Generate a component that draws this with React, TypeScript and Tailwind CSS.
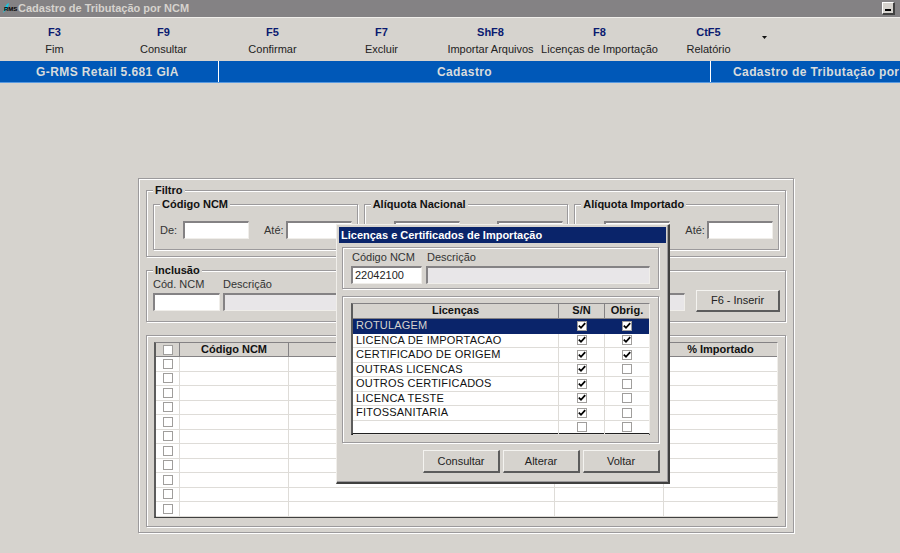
const face = "bg-[#d6d3ce]";

// etched frame used by every group box
const etched = "border border-[#9c9a9c] shadow-[inset_1px_1px_0_#fff,1px_1px_0_#fff]";
const sunken = "border border-t-2 border-l-2 border-t-[#848284] border-l-[#848284] border-r-[#f0eeea] border-b-[#f0eeea]";
const raised =
  "border border-r-2 border-b-2 border-t-[#f4f3f0] border-l-[#f4f3f0] border-r-[#5c5c5c] border-b-[#5c5c5c] bg-[#d6d3ce] text-[11px] text-[#222]";

const toolbar = [
  { key: "F3", label: "Fim" },
  { key: "F9", label: "Consultar" },
  { key: "F5", label: "Confirmar" },
  { key: "F7", label: "Excluir" },
  { key: "ShF8", label: "Importar Arquivos" },
  { key: "F8", label: "Licenças de Importação" },
  { key: "CtF5", label: "Relatório" },
];

const licencas = [
  { nome: "ROTULAGEM", sn: true, obrig: true },
  { nome: "LICENCA DE IMPORTACAO", sn: true, obrig: true },
  { nome: "CERTIFICADO DE ORIGEM", sn: true, obrig: true },
  { nome: "OUTRAS LICENCAS", sn: true, obrig: false },
  { nome: "OUTROS CERTIFICADOS", sn: true, obrig: false },
  { nome: "LICENCA TESTE", sn: true, obrig: false },
  { nome: "FITOSSANITARIA", sn: true, obrig: false },
  { nome: "", sn: false, obrig: false },
];

const Check = ({ checked = false }: { checked?: boolean }) => (
  <span className="flex h-[10px] w-[10px] items-center justify-center border border-[#a09e9c] bg-white">
    {checked && (
      <svg width="8" height="8" viewBox="0 0 8 8">
        <path d="M0.8 3.6 L3 5.8 L7.2 1.2" fill="none" stroke="#000" strokeWidth="1.8" />
      </svg>
    )}
  </span>
);

const Legend = ({ text, className }: { text: string; className: string }) => (
  <span className={`absolute bg-[#d6d3ce] px-[2px] text-[11px] leading-none font-bold text-[#111] ${className}`}>
    {text}
  </span>
);

const Input = ({ className, value }: { className: string; value?: string }) => (
  <div className={`h-[18px] bg-white ${sunken} ${className} pl-[2px] text-[11px] leading-[14px] text-[#222]`}>{value}</div>
);

const RangeGroup = ({ title, last }: { title: string; last?: boolean }) => (
  <div className={`relative flex h-[46px] flex-1 items-start pt-[16px] pl-[6px] ${etched}`}>
    <Legend text={title} className="top-[-6px] left-[6px]" />
    <span className="w-[23px] pt-[1px] text-[11px] text-[#333]">{last ? "" : "De:"}</span>
    <Input className="w-[66px]" />
    <span className={`w-[37px] pt-[1px] pl-[15px] text-[11px] text-[#333] ${last ? "ml-0" : ""}`}>Até:</span>
    <Input className="w-[66px]" />
  </div>
);

export default function App() {
  return (
    <div
      className={`relative h-[553px] w-[900px] overflow-hidden ${face}`}
      style={{ fontFamily: '"Liberation Sans", Arial, sans-serif' }}
    >
      {/* title bar */}
      <div className="flex h-[17px] items-center bg-[#848284] pr-[5px] pl-[2px]">
        <span className="relative flex h-[14px] w-[16px] shrink-0 items-center">
          <svg width="8" height="13" viewBox="0 0 8 13" className="absolute left-0 top-0">
            <path d="M1 11 L3 5 L5 2 L7 1 L6 5 L3 9 Z" fill="#18c8e0" />
          </svg>
          <span className="absolute left-[2px] top-[4px] text-[6px] leading-none font-bold text-black">RMS</span>
        </span>
        <span className="text-[11px] leading-none font-bold text-[#d6d3ce]">Cadastro de Tributação por NCM</span>
        <div className="ml-auto flex gap-0">
          <span className={`flex h-[13px] w-[13px] items-end justify-center pb-[2px] ${"border border-r-2 border-b-2 border-t-white border-l-white border-r-[#404040] border-b-[#404040] bg-[#d6d3ce]"}`}>
            <span className="h-[2px] w-[6px] bg-black" />
          </span>
        </div>
      </div>
      <div className="h-[1px] bg-[#f0eeea]" />

      {/* toolbar */}
      <div className="flex h-[43px] items-start pt-[8px]">
        {toolbar.map((t) => (
          <div key={t.label} className="flex w-[109px] flex-col items-center">
            <span className="text-[11px] leading-[13px] font-bold text-[#0a1a70]">{t.key}</span>
            <span className="mt-[4px] text-[11px] leading-[13px] whitespace-nowrap text-[#222]">{t.label}</span>
          </div>
        ))}
        <svg width="7" height="4" viewBox="0 0 7 4" className="mt-[10px] ml-[-2px] fill-[#111]">
          <path d="M1 0 H6 L3.5 3 Z" />
        </svg>
      </div>

      {/* blue module band */}
      <div className="flex h-[22px] w-[900px] overflow-hidden border-b border-b-[#5a9ae0] bg-[#0058b8] text-[12px] font-bold tracking-[0.4px] text-[#d8dcdc]">
        <div className="flex w-[219px] shrink-0 items-center justify-center border-r border-r-white pr-[3px]">G-RMS Retail 5.681 GIA</div>
        <div className="flex w-[492px] shrink-0 items-center justify-center border-r border-r-white">Cadastro</div>
        <div className="flex shrink-0 items-center pl-[22px] whitespace-nowrap">Cadastro de Tributação por NCM</div>
      </div>

      {/* main panel */}
      <div className={`mx-[138px] mt-[95px] h-[355px] w-[656px] px-[7px] ${etched}`}>
        {/* Filtro */}
        <div className={`relative mt-[11px] h-[67px] ${etched}`}>
          <Legend text="Filtro" className="top-[-6px] left-[6px]" />
          <div className="mx-[6px] mt-[13px] flex gap-[6px]">
            <RangeGroup title="Código NCM" />
            <RangeGroup title="Alíquota Nacional" />
            <RangeGroup title="Alíquota Importado" />
          </div>
        </div>

        {/* Inclusão */}
        <div className={`relative mt-[13px] h-[52px] pt-[6px] pl-[6px] ${etched}`}>
          <Legend text="Inclusão" className="top-[-6px] left-[6px]" />
          <div className="flex h-[14px] text-[11px] leading-[14px] text-[#333]">
            <span className="w-[70px]">Cód. NCM</span>
            <span>Descrição</span>
          </div>
          <div className="mt-[2px] flex items-start gap-[3px]">
            <Input className="w-[67px]" />
            <div className={`h-[18px] w-[462px] bg-[#e8e6e8] ${sunken}`} />
            <button className={`mt-[-3px] ml-[8px] h-[22px] w-[84px] ${raised}`}>F6 - Inserir</button>
          </div>
        </div>

        {/* Grid */}
        <div className={`mt-[13px] h-[192px] px-[7px] pt-[6px] ${etched}`}>
          <div className="h-[176px] border border-b-2 border-l-2 border-t-[#848284] border-l-[#5c5c5c] border-r-[#f0eeea] border-b-[#404040] bg-white">
            <div className="flex h-[14px] border-b border-b-[#848284] bg-[#d6d3ce] text-[11px] leading-[13px] font-bold text-[#111]">
              <div className="flex w-[24px] items-center justify-center border-r border-r-[#848284]"><Check /></div>
              <div className="w-[109px] border-r border-r-[#848284] text-center">Código NCM</div>
              <div className="w-[266px] border-r border-r-[#848284]" />
              <div className="w-[109px] border-r border-r-[#848284]" />
              <div className="flex-1 text-center">% Importado</div>
            </div>
            {Array.from({ length: 11 }).map((_, i) => (
              <div key={i} className="flex h-[14.5px] border-b border-b-[#dedcd8]">
                <div className="flex w-[24px] items-center justify-center border-r border-r-[#dedcd8]"><Check /></div>
                <div className="w-[109px] border-r border-r-[#dedcd8]" />
                <div className="w-[266px] border-r border-r-[#dedcd8]" />
                <div className="w-[109px] border-r border-r-[#dedcd8]" />
                <div className="flex-1" />
              </div>
            ))}
          </div>
        </div>
      </div>

      {/* dialog */}
      <div className="absolute top-[224px] left-[336px] h-[260px] w-[334px] border border-r-2 border-b-2 border-t-[#f0eeea] border-l-[#f0eeea] border-r-[#404040] border-b-[#404040] bg-[#d6d3ce] p-[2px] shadow-[inset_-1px_-1px_0_#9c9a9c]">
        <div className="flex h-[16px] items-center bg-[#0a246a] pl-[2px] text-[11px] font-bold text-white">
          Licenças e Certificados de Importação
        </div>

        <div className={`mx-[3px] mt-[4px] h-[42px] w-[317px] px-[8px] pt-[2px] ${etched}`}>
          <div className="flex h-[15px] text-[11px] leading-[15px] text-[#333]">
            <span className="w-[76px] pl-[1px]">Código NCM</span>
            <span>Descrição</span>
          </div>
          <div className="mt-[1px] flex gap-[4px]">
            <Input className="w-[72px]" value="22042100" />
            <div className={`h-[18px] w-[228px] bg-[#e8e6e8] ${sunken}`} />
          </div>
        </div>

        <div className={`mx-[3px] mt-[7px] h-[147px] w-[317px] px-[8px] pt-[6px] ${etched}`}>
          <div className="h-[132px] border border-b-2 border-l-2 border-t-[#848284] border-l-[#5c5c5c] border-r-[#f0eeea] border-b-[#202020] bg-white">
            <div className="flex h-[15px] border-b border-b-[#848284] bg-[#d6d3ce] text-[11px] leading-[13px] font-bold text-[#111]">
              <div className="w-[206px] border-r border-r-[#848284] text-center">Licenças</div>
              <div className="w-[46px] border-r border-r-[#848284] text-center">S/N</div>
              <div className="flex-1 text-center">Obrig.</div>
            </div>
            {licencas.map((l, i) => (
              <div
                key={i}
                className={`flex h-[14.5px] text-[11px] leading-[13px] tracking-[0.2px] ${
                  i === 0 ? "bg-[#0a246a] text-[#d6d3ce]" : "border-b border-b-[#dedcd8] text-[#111]"
                }`}
              >
                <div className={`w-[206px] pl-[3px] ${i === 0 ? "" : "border-r border-r-[#dedcd8]"}`}>{l.nome}</div>
                <div className={`flex w-[46px] items-center justify-center ${i === 0 ? "" : "border-r border-r-[#dedcd8]"}`}>
                  <Check checked={l.sn} />
                </div>
                <div className="flex flex-1 items-center justify-center">
                  <Check checked={l.obrig} />
                </div>
              </div>
            ))}
          </div>
        </div>

        <div className="mt-[7px] flex justify-end gap-[3px] pr-[6px]">
          <button className={`h-[23px] w-[77px] ${raised}`}>Consultar</button>
          <button className={`h-[23px] w-[77px] ${raised}`}>Alterar</button>
          <button className={`h-[23px] w-[77px] ${raised}`}>Voltar</button>
        </div>
      </div>
    </div>
  );
}
